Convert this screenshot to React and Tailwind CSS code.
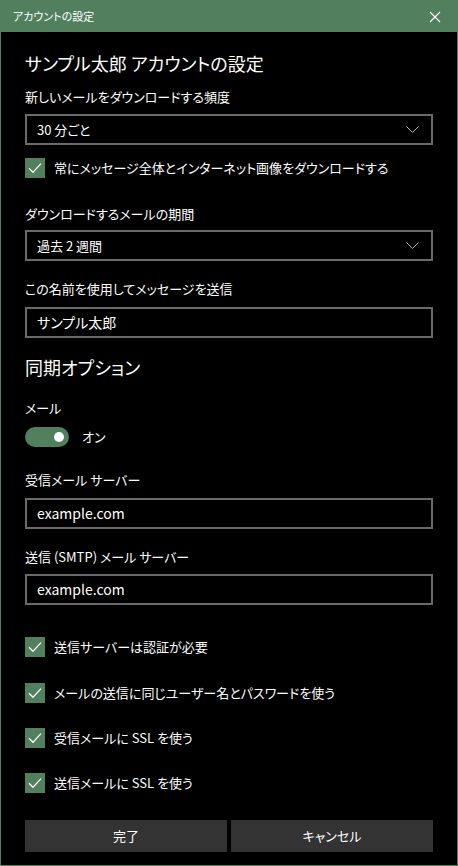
import React from "react";

const jp = "font-['Segoe_UI','Noto_Sans_CJK_JP',sans-serif] [font-feature-settings:'palt']";

function Check() {
  return (
    <div className="w-[20px] h-[20px] bg-[#527f5e] flex items-center justify-center shrink-0">
      <svg width="14" height="12" viewBox="0 0 14 12" fill="none">
        <path d="M1 6.2 L5 10.2 L13 1.6" stroke="#fff" strokeWidth="1.3" />
      </svg>
    </div>
  );
}

function Chevron() {
  return (
    <svg width="13" height="7" viewBox="0 0 13 7" fill="none">
      <path d="M0.5 0.5 L6.5 6.5 L12.5 0.5" stroke="#b5b5b5" strokeWidth="1" />
    </svg>
  );
}

function Select({ value, className }) {
  return (
    <div
      className={`h-[31px] border-2 border-[#6a6a6a] flex items-center justify-between pl-[10px] pr-[12px] text-[13px] text-white ${className}`}
    >
      <span>{value}</span>
      <Chevron />
    </div>
  );
}

function Input({ value, className }) {
  return (
    <div
      className={`h-[31px] border-2 border-[#6a6a6a] flex items-center pl-[10px] text-[14px] text-white ${className}`}
    >
      {value}
    </div>
  );
}

function CheckRow({ label, className }) {
  return (
    <div className={`flex items-center gap-[9px] h-[20px] ${className}`}>
      <Check />
      <span className="text-[13px] text-white">{label}</span>
    </div>
  );
}

export default function App() {
  return (
    <div
      className={`w-[458px] h-[866px] bg-black border border-[#527f5e] flex flex-col ${jp}`}
    >
      <div className="h-[31px] bg-[#527f5e] flex items-center justify-between pl-[12px] pr-[16px] shrink-0">
        <span className="text-[11px] text-white">アカウントの設定</span>
        <svg width="12" height="12" viewBox="0 0 12 12" fill="none">
          <path d="M1 1 L11 11 M11 1 L1 11" stroke="#fff" strokeWidth="1.1" />
        </svg>
      </div>

      <div className="flex flex-col pl-[24px] pr-[24px] pt-[17px]">
        <h1 className="text-[18px] leading-[28px] text-white">
          サンプル太郎 アカウントの設定
        </h1>

        <label className="mt-[10px] text-[13px] leading-[20px] text-white">
          新しいメールをダウンロードする頻度
        </label>
        <Select value="30 分ごと" className="mt-[7px]" />

        <CheckRow
          label="常にメッセージ全体とインターネット画像をダウンロードする"
          className="mt-[13px]"
        />

        <label className="mt-[26px] text-[13px] leading-[20px] text-white">
          ダウンロードするメールの期間
        </label>
        <Select value="過去 2 週間" className="mt-[6px]" />

        <label className="mt-[18px] text-[13px] leading-[20px] text-white">
          この名前を使用してメッセージを送信
        </label>
        <Input value="サンプル太郎" className="mt-[8px] text-[13px]" />

        <h2 className="mt-[15px] text-[18px] leading-[28px] text-white">
          同期オプション
        </h2>

        <label className="mt-[17px] text-[13px] leading-[20px] text-white">
          メール
        </label>
        <div className="mt-[9px] flex items-center gap-[13px]">
          <div className="w-[44px] h-[20px] rounded-full bg-[#527f5e] flex items-center justify-end pr-[5px]">
            <div className="w-[10px] h-[10px] rounded-full bg-white" />
          </div>
          <span className="text-[13px] text-white">オン</span>
        </div>

        <label className="mt-[23px] text-[13px] leading-[20px] text-white">
          受信メール サーバー
        </label>
        <Input value="example.com" className="mt-[8px]" />

        <label className="mt-[18px] text-[13px] leading-[20px] text-white">
          送信 (SMTP) メール サーバー
        </label>
        <Input value="example.com" className="mt-[7px]" />

        <CheckRow label="送信サーバーは認証が必要" className="mt-[32px]" />
        <CheckRow
          label="メールの送信に同じユーザー名とパスワードを使う"
          className="mt-[26px]"
        />
        <CheckRow label="受信メールに SSL を使う" className="mt-[25px]" />
        <CheckRow label="送信メールに SSL を使う" className="mt-[25px]" />

        <div className="mt-[27px] grid grid-cols-2 gap-[4px]">
          <button className="h-[32px] bg-[#333333] text-[13px] text-white">
            完了
          </button>
          <button className="h-[32px] bg-[#333333] text-[13px] text-white">
            キャンセル
          </button>
        </div>
      </div>
    </div>
  );
}
